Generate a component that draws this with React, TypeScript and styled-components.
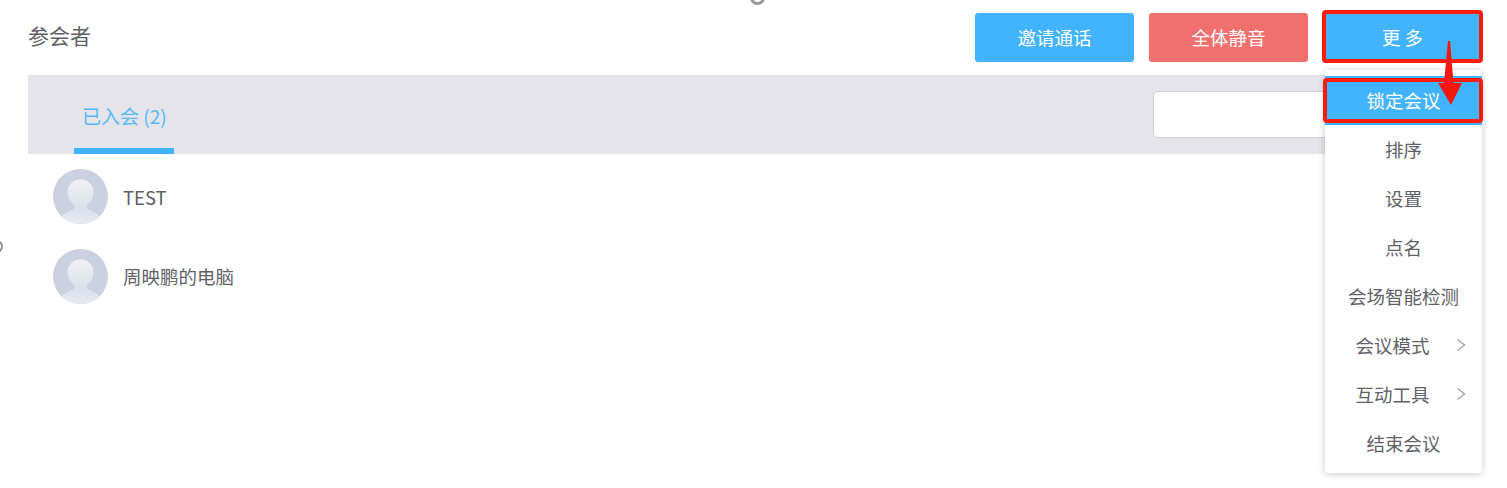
import React from "react";
import styled, { createGlobalStyle } from "styled-components";

const Global = createGlobalStyle`
  html, body { margin: 0; padding: 0; background: #fff; }
  body { width: 1507px; height: 488px; overflow: hidden; font-family: "Noto Sans CJK SC", "Liberation Sans", sans-serif; }
`;

const Page = styled.div`
  position: relative;
  width: 1507px;
  height: 488px;
  padding: 13px 25px 0 28px;
  box-sizing: border-box;
  background: #fff;
  filter: blur(0.35px);
`;

const Header = styled.header`
  display: flex;
  justify-content: space-between;
  align-items: flex-start;
  height: 62px;
`;

const Title = styled.h2`
  margin: 0;
  padding: 7px 0 0;
  font-size: 21px;
  line-height: 30px;
  font-weight: 400;
  color: #5f5f66;
`;

const Actions = styled.div`
  display: flex;
  gap: 15px;
`;

const ActionButton = styled.button<{ $tone: "blue" | "red" }>`
  position: relative;
  width: 159px;
  height: 49px;
  border: 0;
  border-radius: 3px;
  padding: 0;
  background: ${(p) => (p.$tone === "blue" ? "#42b3ff" : "#ef706c")};
  color: #fff;
  font: inherit;
  font-size: 18.5px;
  line-height: 49px;
`;

const Marked = styled.span`
  position: absolute;
  inset: -3px -1px -1px -1px;
  border: 4px solid #ff1a0a;
  border-radius: 4px;
  pointer-events: none;
`;

const TabBar = styled.div`
  display: flex;
  justify-content: space-between;
  height: 79px;
  background: #e4e4ea;
`;

const Tab = styled.div`
  margin-left: 46px;
  width: 100px;
  height: 79px;
  box-sizing: border-box;
  border-bottom: 6px solid #42b3ff;
  color: #55b8f8;
  font-size: 19px;
  line-height: 82px;
  text-indent: 8px;
  white-space: nowrap;
`;

const Search = styled.input`
  margin: 16px 0 0;
  width: 329px;
  height: 47px;
  box-sizing: border-box;
  border: 1px solid #cfcfd2;
  border-radius: 5px;
  background: #fff;
`;

const List = styled.ul`
  list-style: none;
  margin: 15px 0 0;
  padding: 0 0 0 25px;
`;

const Row = styled.li`
  display: flex;
  align-items: center;
  gap: 15px;
  height: 55px;
  margin-bottom: 25px;
  color: #5f5f66;
  font-size: 18.5px;
`;

const Name = styled.span<{ $cjk?: boolean }>`
  padding-bottom: ${(p) => (p.$cjk ? "1px" : "0")};
`;

const Menu = styled.ul`
  position: absolute;
  left: 1325px;
  top: 70px;
  width: 157px;
  height: 403px;
  box-sizing: border-box;
  margin: 0;
  padding: 6px 0 0;
  list-style: none;
  background: #fff;
  border-radius: 3px;
  box-shadow: 0 1px 7px rgba(0, 0, 0, 0.22);
`;

const MenuItem = styled.li<{ $active?: boolean; $sub?: boolean }>`
  position: relative;
  display: flex;
  justify-content: center;
  align-items: center;
  gap: 26px;
  height: 49px;
  box-sizing: border-box;
  padding: 0 0 2px ${(p) => (p.$sub ? "14px" : "0")};
  font-size: 18.5px;
  color: ${(p) => (p.$active ? "#fff" : "#5f5f66")};
  background: ${(p) => (p.$active ? "#42b3ff" : "transparent")};
`;

const Chevron = styled.svg`
  width: 10px;
  height: 14px;
  fill: none;
  stroke: #a5a5aa;
  stroke-width: 1.5;
`;

const MenuMark = styled.span`
  position: absolute;
  inset: 2px -1px 2px -2px;
  border: 4px solid #ff1a0a;
  border-radius: 4px;
`;

const Arrow = styled.svg`
  position: absolute;
  left: 1436px;
  top: 40px;
  width: 30px;
  height: 66px;
`;

const StrayTop = styled.span`
  position: absolute;
  left: 750px;
  top: -9px;
  width: 9px;
  height: 8px;
  border: 3px solid #9a9a9a;
  border-radius: 50%;
`;

const StrayLeft = styled.span`
  position: absolute;
  left: -9px;
  top: 240px;
  width: 8px;
  height: 9px;
  border: 2px solid #8f8f8f;
  border-radius: 50%;
`;

const Avatar = () => (
  <svg width="55" height="55" viewBox="0 0 55 55">
    <defs>
      <clipPath id="avatarClip"><circle cx="27.500" cy="27.500" r="27.500" /></clipPath>
      <linearGradient id="figureFill" x1="0" y1="0" x2="0" y2="1">
        <stop offset="0" stopColor="#f0f1f6" />
        <stop offset="0.65" stopColor="#dde0ea" />
        <stop offset="1" stopColor="#e9ebf2" />
      </linearGradient>
    </defs>
    <g clipPath="url(#avatarClip)">
      <rect width="55" height="55" fill="#cbd1e0" />
      <path d="M27.500 10.500c7.500 0 13 5.500 13 12.500 0 5.500-3 10-6.500 13-1 .9-1 3 .5 3.900 5 2.800 11 4.100 13 9.600-5 4-12 6.500-20 6.500s-15-2.500-20-6.500c2-5.500 8-6.800 13-9.600 1.500-.9 1.500-3 .5-3.900-3.500-3-6.500-7.500-6.500-13 0-7 5.500-12.500 13-12.500z" fill="url(#figureFill)" />
    </g>
  </svg>
);

const menu = ["锁定会议", "排序", "设置", "点名", "会场智能检测", "会议模式", "互动工具", "结束会议"];

export default function App() {
  return (
    <Page>
      <Global />
      <StrayTop />
      <StrayLeft />
      <Header>
        <Title>参会者</Title>
        <Actions>
          <ActionButton $tone="blue">邀请通话</ActionButton>
          <ActionButton $tone="red">全体静音</ActionButton>
          <ActionButton $tone="blue">
            更 多
            <Marked />
          </ActionButton>
        </Actions>
      </Header>
      <TabBar>
        <Tab>已入会 (2)</Tab>
        <Search />
      </TabBar>
      <List>
        <Row><Avatar /><Name>TEST</Name></Row>
        <Row><Avatar /><Name $cjk>周映鹏的电脑</Name></Row>
      </List>
      <Menu>
        {menu.map((label, i) => (
          <MenuItem key={label} $active={i === 0} $sub={i === 5 || i === 6}>
            {label}
            {i === 0 && <MenuMark />}
            {(i === 5 || i === 6) && (
              <Chevron viewBox="0 0 10 14"><path d="M1.500 1.500 8.500 7 1.500 12.500" /></Chevron>
            )}
          </MenuItem>
        ))}
      </Menu>
      <Arrow viewBox="0 0 30 66">
        <path d="M12 1 14 1 17.500 43 26 43 15 65 2 43 8 43z" fill="#f5170c" />
      </Arrow>
    </Page>
  );
}
